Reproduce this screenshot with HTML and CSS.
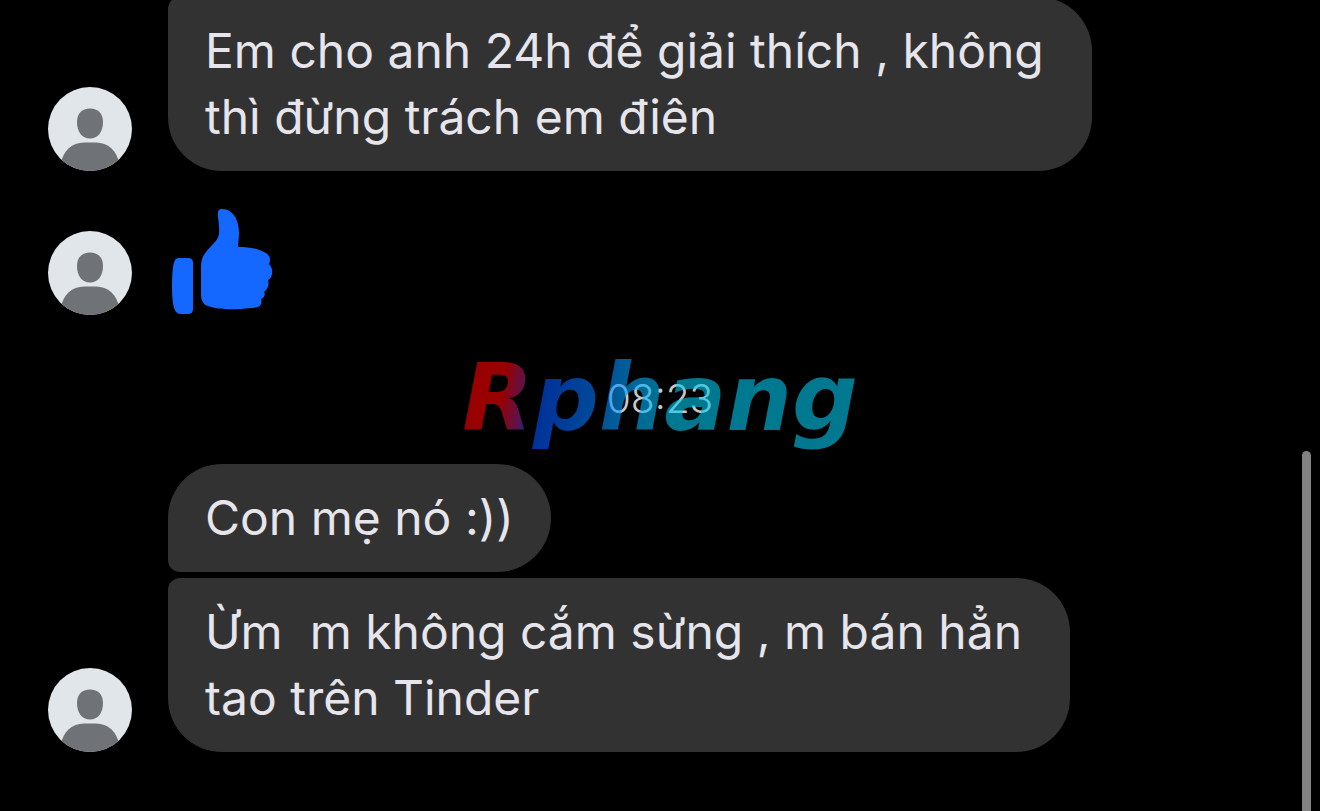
FILE: index.html
```
<!DOCTYPE html>
<html lang="vi">
<head>
  <meta charset="UTF-8">
  <meta name="viewport" content="width=device-width, initial-scale=1.0">
  <title>Tin nhắn</title>
  <link rel="stylesheet" href="styles.css">
</head>
<body>

  <!-- Avatar dùng chung -->
  <svg class="symbols" aria-hidden="true">
    <symbol id="avatar" viewBox="0 0 84 84">
      <rect width="84" height="84" fill="#e1e6ea"/>
      <path fill="#6f7378" d="M42 21.500C50 21.500 55 26.500 55 35C55 45 50 51.500 42 51.500S29 45 29 35C29 26.500 34 21.500 42 21.500Z"/>
      <path fill="#6f7378" d="M13 84V76C15 64 24 55.500 36 55.500H48C60 55.500 69 64 71 76V84Z"/>
    </symbol>
  </svg>

  <main class="chat">
    <div class="row">
      <svg class="avatar"><use href="#avatar"/></svg>
      <p class="bubble bubble-last">Em cho anh 24h để giải thích , không<br>thì đừng trách em điên</p>
    </div>

    <div class="row row-like">
      <svg class="avatar"><use href="#avatar"/></svg>
      <svg class="like" viewBox="0 0 108 108" role="img" aria-label="Thích">
        <path d="M10 51H20Q25 51 25 56V102Q25 107 20 107H13Q8 107 6 101Q4 94 4 80Q4 65 5.500 57Q7 51 10 51Z"/>
        <path d="M50 5Q50 2 54 2C65 2 71 13 71 26C71 32 70 36 70 40C82 40 92 42 98 46Q104 50 101 57Q105 61 104 67Q103 72 100 73Q102 80 96 85Q98 88 95 91L93 92Q96 101 82 101C68 103 50 103 40 99Q33 97 33 88V59C33 49 38 45 44 38C49 33 52 30 51 20C51 13 49 10 50 5Z"/>
      </svg>
    </div>

    <div class="divider">
      <time datetime="08:23">08:23</time>
      <span class="watermark">Rphang</span>
    </div>

    <div class="row">
      <p class="bubble bubble-first">Con mẹ nó :))</p>
    </div>
    <div class="row row-next">
      <svg class="avatar"><use href="#avatar"/></svg>
      <p class="bubble bubble-last">Ừm&nbsp; m không cắm sừng , m bán hẳn<br>tao trên Tinder</p>
    </div>
  </main>

  <div class="scrollbar"></div>

</body>
</html>
```
FILE: styles.css
```
* {
    box-sizing: border-box;
}

body {
    margin: 0;
    background-color: #000;
    color: #e6e5eb;
    font-family: Inter, "Noto Sans", sans-serif;
}

.symbols {
    position: absolute;
    width: 0;
    height: 0;
}

/* Cuộc trò chuyện bám theo đáy màn hình */
.chat {
    display: flex;
    flex-direction: column;
    justify-content: flex-end;
    height: 100vh;
    padding: 0 48px 59px;
    overflow: hidden;
}

.row {
    display: flex;
    flex-shrink: 0;
    align-items: flex-end;
    padding-left: 120px;
}

.row-like {
    margin-top: 36px;
}

.row-next {
    margin-top: 6px;
}

.avatar {
    flex-shrink: 0;
    width: 84px;
    height: 84px;
    margin-left: -120px;
    margin-right: 36px;
    border-radius: 50%;
}

.bubble {
    margin: 0;
    padding: 21px 48px 21px 37px;
    border-radius: 54px;
    background-color: #323233;
    font-size: 48px;
    line-height: 66px;
    white-space: nowrap;
}

.bubble-first {
    padding-right: 37px;
    border-bottom-left-radius: 12px;
}

.bubble-last {
    border-top-left-radius: 12px;
}

.like {
    display: block;
    width: 108px;
    height: 108px;
    fill: #1468ff;
}

/* Giờ và logo */
.divider {
    position: relative;
    display: flex;
    flex-shrink: 0;
    justify-content: center;
    padding: 60px 0 41px;
    color: #c8c8ca;
    font-size: 39px;
    font-weight: 300;
    line-height: 48px;
}

.watermark {
    position: absolute;
    top: 30px;
    left: 50%;
    transform: translateX(-50%);
    padding: 0 8px;
    background: linear-gradient(100deg, #ff0000 13%, #992185 18%, #0050ff 21%, #0078ff 34%, #00a8ff 43%, #00c8ee 54%);
    -webkit-background-clip: text;
    background-clip: text;
    color: transparent;
    font-family: "DejaVu Sans", sans-serif;
    font-size: 92px;
    font-style: italic;
    font-weight: bold;
    line-height: 108px;
    opacity: 0.6;
}

.scrollbar {
    position: fixed;
    top: 451px;
    right: 9px;
    bottom: 0;
    width: 9px;
    border-radius: 5px 5px 0 0;
    background-color: #828282;
}
```
